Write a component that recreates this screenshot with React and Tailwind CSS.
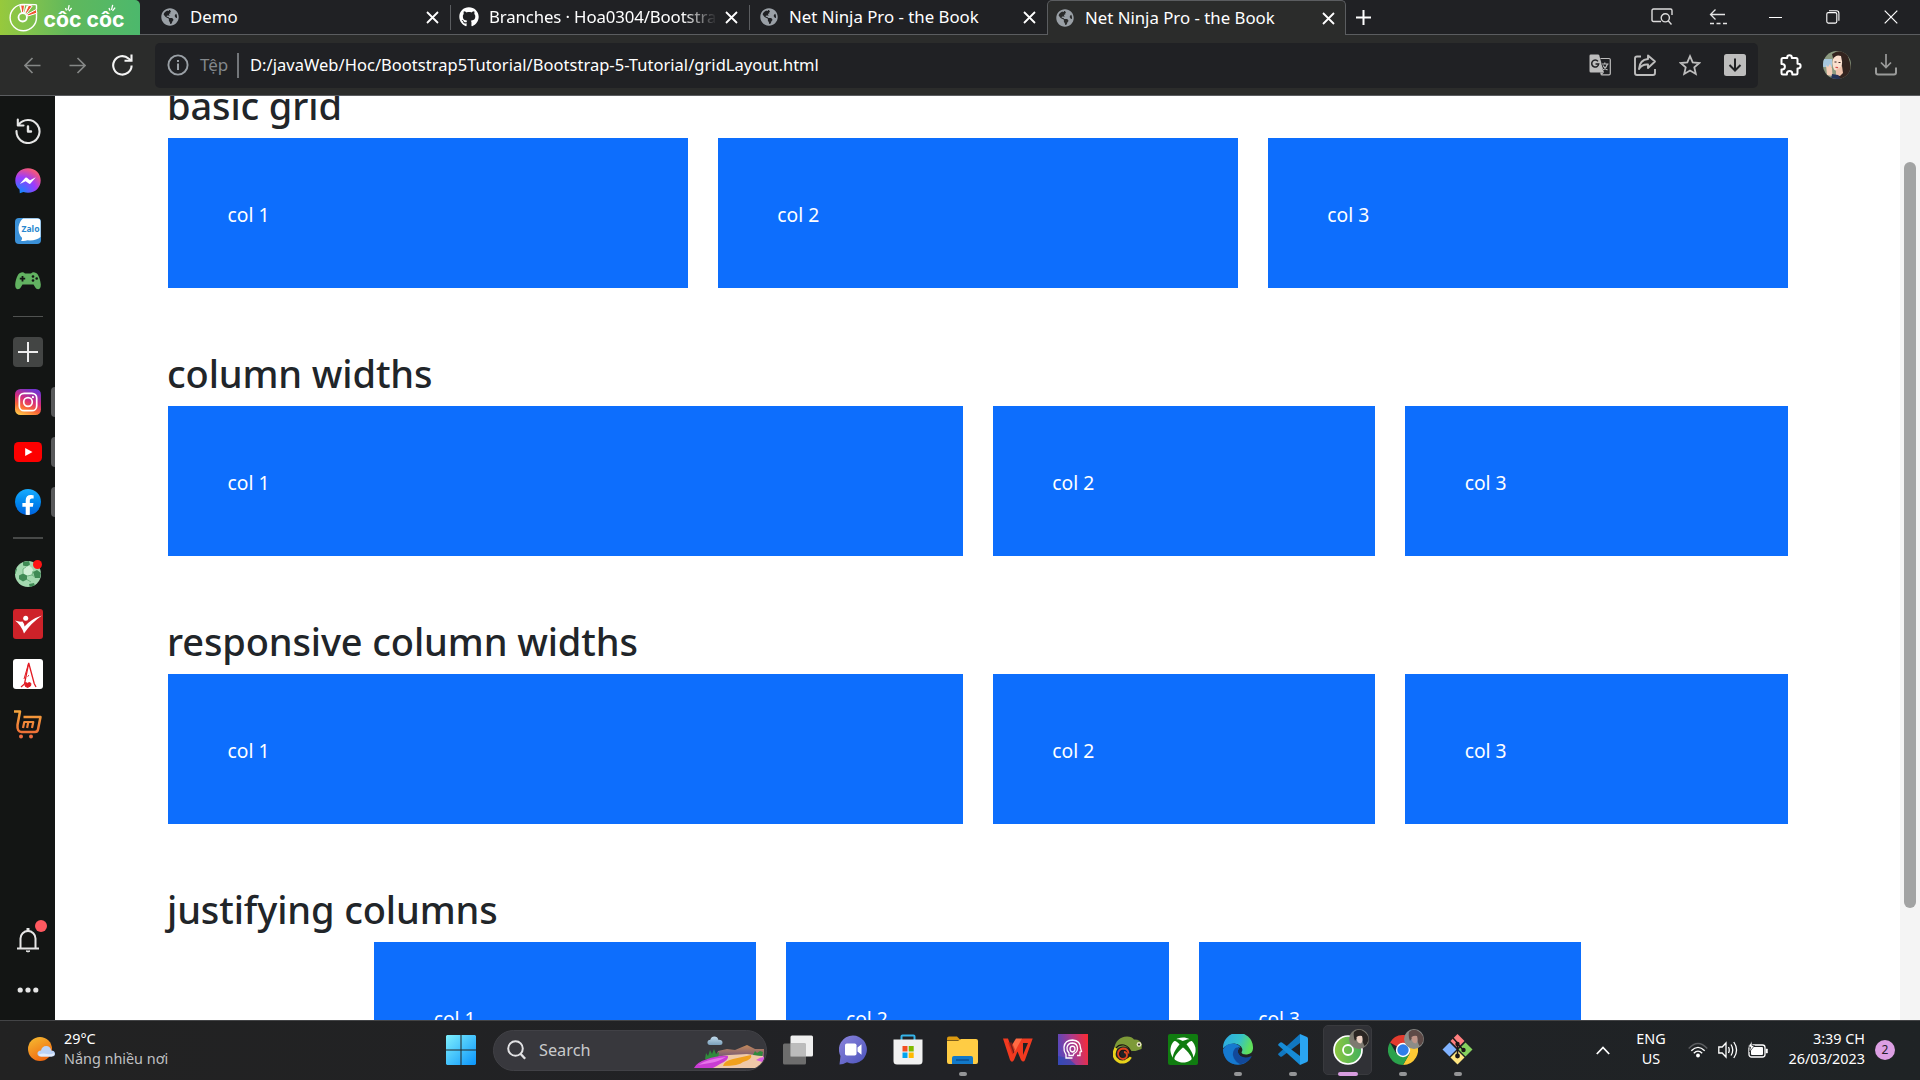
import React from "react";
import {
  FaGithub,
  FaGlobeAmericas,
  FaXbox,
  FaFacebookF,
} from "react-icons/fa";

/* ---------- tab strip ---------- */

function CocCocLogo() {
  return (
    <div className="flex h-[35px] w-[140px] shrink-0 rounded-tr-[5px] bg-linear-to-r from-[#97c93c] via-[#5fb85c] to-[#4cb86c]">
      <svg width="140" height="35" viewBox="0 0 140 35" fill="none">
        <path d="M36.5 9.5V5.5Q36.5 4.6 35 4.6L23 4.4A13.2 13.2 0 1 0 36.5 17.5V12" stroke="#fff" strokeWidth="1.4" />
        <path d="M19.2 5.5l4.2.2-.6 7-1.4.1zM26.8 5.2l3 1.2-4.8 7.2-1-.8zM35.8 9.8l.3 3.6-9.6 3-.3-1.2z" fill="#fff" />
        <path d="M20.6 5l4 .2-1.200 7.600-1.600-.100zM28.600 5.200l3.600.800-5.400 7.400-1.400-1zM36.400 9.400l.3 3.800-8.800 2.800-.8-1.600z" fill="#f0532f" stroke="#fff" strokeWidth="1" />
        <circle cx="22.700" cy="17.300" r="4.200" stroke="#fff" strokeWidth="1.800" />
        <text x="43.500" y="27.200" fill="#fff" fontFamily="Inter, sans-serif" fontSize="21" fontWeight="700" textLength="81" lengthAdjust="spacingAndGlyphs">
          côc côc
        </text>
        <g stroke="#fff" strokeWidth="1.3">
          <path d="M65.5 8l1 2.600M69.200 5.200l-1.200 5M71.600 8l-2.600 3.200" />
          <path d="M109 8l1 2.600M112.700 4.800l-1.200 5M115.100 7.600l-2.600 3.200" />
        </g>
      </svg>
    </div>
  );
}

function CloseX() {
  return (
    <svg className="shrink-0" width="13" height="13" viewBox="0 0 13 13" stroke="#fff" strokeWidth="1.8">
      <path d="M1 1l11 11M12 1L1 12" />
    </svg>
  );
}

function Tab({ icon, title, active, fade, width }) {
  return (
    <div
      className={
        (active
          ? "rounded-t-[5px] border border-b-0 border-[#5b5d60] bg-[#2b2c2b] pl-[8px] pr-[10px] "
          : "border-b border-[#5b5d60] pr-[11px] ") +
        "flex h-[35px] shrink-0 items-center " +
        width
      }
    >
      {icon === "github" ? (
        <FaGithub className="size-5 shrink-0 text-white" />
      ) : (
        <FaGlobeAmericas className="mr-px size-[18px] shrink-0 text-[#9aa0a6]" />
      )}
      <div
        className={
          "ml-[10px] flex-1 overflow-hidden whitespace-nowrap text-[16.8px] leading-6 text-white " +
          (fade ? "mr-[8px] tracking-[-0.12px] mask-r-from-85%" : "")
        }
      >
        {title}
      </div>
      <CloseX />
    </div>
  );
}

function Divider() {
  return (
    <div className="h-[35px] w-px shrink-0 border-b border-[#5b5d60] pt-[5px]">
      <div className="h-[25px] w-px bg-[#5b5d60]" />
    </div>
  );
}

function TabStrip() {
  return (
    <div className="flex h-[35px] bg-[#202124]">
      <CocCocLogo />
      <div className="w-[9px] border-b border-[#5b5d60]" />
      <Tab title="Demo" width="w-[301px] pl-[12px]" />
      <Divider />
      <Tab icon="github" title="Branches · Hoa0304/Bootstrap" fade width="w-[298px] pl-[8px]" />
      <Divider />
      <Tab title="Net Ninja Pro - the Book" width="w-[297px] pl-[10px]" />
      <Tab title="Net Ninja Pro - the Book" active width="w-[299px]" />
      <div className="flex flex-1 items-center border-b border-[#5b5d60] pl-[10px]">
        <svg width="15" height="15" viewBox="0 0 15 15" stroke="#fff" strokeWidth="2">
          <path d="M7.5 0v15M0 7.5h15" />
        </svg>
        <div className="ml-auto flex items-center">
          <svg width="22" height="18" viewBox="0 0 22 18" fill="none" stroke="#dcdcdc" strokeWidth="1.4">
            <path d="M10 13.5H2.5Q1 13.5 1 12V2.5Q1 1 2.5 1h17Q21 1 21 2.500V7" />
            <circle cx="14.3" cy="9.800" r="4.100" />
            <path d="M17.200 12.800l3.300 3.700" />
          </svg>
          <svg className="ml-[36px]" width="18" height="18" viewBox="0 0 18 18" fill="none" stroke="#e4e4e4" strokeWidth="1.300">
            <path d="M16 6.500H1.500M6.500 1.500l-5 5 5 5" />
            <path d="M1 15.500h17" strokeDasharray="4 2.500" />
          </svg>
          <svg className="ml-[42px]" width="13" height="13" viewBox="0 0 13 13" stroke="#fff">
            <path d="M0 6.500h13" />
          </svg>
          <svg className="ml-[44px]" width="14" height="14" viewBox="0 0 14 14" fill="none" stroke="#fff" strokeWidth="1.100">
            <rect x="0.800" y="2.600" width="10" height="10.500" rx="1.500" />
            <path d="M3 .8h7.500Q12.900.8 12.900 3.200v7.500" />
          </svg>
          <svg className="mr-[22px] ml-[44px]" width="14" height="14" viewBox="0 0 14 14" stroke="#fff" strokeWidth="1.200">
            <path d="M.7.7l12.600 12.600M13.300.7L.7 13.300" />
          </svg>
        </div>
      </div>
    </div>
  );
}

/* ---------- toolbar ---------- */

function Avatar() {
  return (
    <svg className="ml-[21px]" width="28" height="28" viewBox="0 0 28 28">
      <defs>
        <clipPath id="av">
          <circle cx="14" cy="14" r="14" />
        </clipPath>
      </defs>
      <g clipPath="url(#av)">
        <rect width="28" height="28" fill="#8b9a80" />
        <path d="M0 8h9v8H0z" fill="#a8c8de" />
        <path d="M9 3Q18-3 24 3q5 10 4 25H15z" fill="#33241f" />
        <path d="M10 8q3-5 8-3 2 6 .5 12-4 4.500-7.500 1.500-2.500-5-1-10.500z" fill="#fbe0cf" />
        <path d="M3 14l2 2 2-3 2 4 .5 8L4 24z" fill="#f5cdb6" />
        <path d="M13 19l6-4 1 7-3 3-4-1z" fill="#f0c4ad" />
        <path d="M9 23l6 1 3 4H8z" fill="#26355a" />
        <path d="M12.500 16.300l2.600.4" stroke="#d3504c" strokeWidth="1.300" />
        <path d="M11.500 11h2M15.500 11.500h2" stroke="#3a2622" />
      </g>
    </svg>
  );
}

function Toolbar() {
  return (
    <div className="flex h-[61px] items-center border-b border-[#5b5d60] bg-[#2b2c2b] pl-[24px]">
      <svg width="17" height="17" viewBox="0 0 17 17" fill="none" stroke="#858786" strokeWidth="1.700">
        <path d="M16.500 8.500H1M8.500 1L1 8.500 8.500 16" />
      </svg>
      <svg className="ml-[28px]" width="17" height="17" viewBox="0 0 17 17" fill="none" stroke="#858786" strokeWidth="1.700">
        <path d="M.5 8.500H16M8.500 1L16 8.500 8.500 16" />
      </svg>
      <svg className="ml-[26px]" width="21" height="22" viewBox="0 0 21 22" fill="none" stroke="#f4f4f4" strokeWidth="2.100">
        <path d="M19.600 11.500A9.200 9.200 0 1 1 16.500 4.500L19.200 6.500" />
        <path d="M12.500 6.800h7V.5" />
      </svg>
      <div className="ml-[22px] flex h-[45px] w-[1603px] items-center rounded-[5px] bg-[#202124] pl-[12px]">
        <svg width="22" height="22" viewBox="0 0 22 22" fill="none" stroke="#9aa0a6">
          <circle cx="11" cy="11" r="9.600" strokeWidth="1.900" />
          <path d="M11 9.500v6.500M11 6v2" strokeWidth="2" />
        </svg>
        <div className="ml-[11px] w-[37px] text-[17px] leading-6 text-[#83878b]">Tệp</div>
        <div className="h-[25px] w-[2px] bg-[#73767a]" />
        <div className="ml-[11px] flex-1 whitespace-nowrap text-[16.500px] leading-6 tracking-[0.03px] text-white">
          D:/javaWeb/Hoc/Bootstrap5Tutorial/Bootstrap-5-Tutorial/gridLayout.html
        </div>
        <svg width="22" height="22" viewBox="0 0 22 22">
          <path d="M11.500 4.500H20q1.300 0 1.300 1.300v13.700q0 1.300-1.300 1.300h-7.500" fill="none" stroke="#bdbdbd" strokeWidth="1.200" />
          <path d="M1.800.5h7.200q1 0 1.300 1l4.700 17H1.800Q.5 18.500.5 17V1.800Q.5.500 1.800.500z" fill="#bdbdbd" />
          <path d="M11 18.500h4l-3 3z" fill="#bdbdbd" />
          <path d="M9 7.400A3.500 3.500 0 1 0 9.700 10H6.500" fill="none" stroke="#202124" strokeWidth="1.500" />
          <path d="M12.500 10h7M15.800 8.500V10M18.500 10q-1 3.500-4.500 6M14 11.500q1.500 3 4.500 4.500" fill="none" stroke="#202124" strokeWidth="2.400" />
          <path d="M12.500 10h7M15.800 8.500V10M18.500 10q-1 3.500-4.500 6M14 11.500q1.500 3 4.500 4.500" fill="none" stroke="#bdbdbd" strokeWidth="1.200" />
        </svg>
        <svg className="ml-[22px]" width="24" height="23" viewBox="0 0 24 23" fill="none" stroke="#bdbdbd" strokeWidth="1.900" strokeLinejoin="round">
          <path d="M8 2.500H4Q2 2.500 2 4.500v14.500q0 2 2 2h16q2 0 2-2V15" />
          <path d="M15 1.500l7 6-7 6.500V10.500Q9 10 6 15 6.500 5.800 15 5z" />
        </svg>
        <svg className="ml-[22px]" width="22" height="22" viewBox="0 0 22 22" fill="none" stroke="#bdbdbd" strokeWidth="1.800">
          <path d="M11 2.200l2.700 6.200 6.600.6-5 4.400 1.500 6.600L11 16.500 5.200 20l1.500-6.600-5-4.400 6.600-.6z" />
        </svg>
        <svg className="mr-[12px] ml-[23px]" width="22" height="22" viewBox="0 0 22 22">
          <rect width="22" height="22" rx="2.500" fill="#bdbdbd" />
          <path d="M11 4.500v12M5.500 11l5.500 5.500 5.500-5.500" fill="none" stroke="#202124" strokeWidth="2" />
        </svg>
      </div>
      <svg className="ml-[22px]" width="22" height="22" viewBox="0 0 22 22" fill="none" stroke="#fff" strokeWidth="2" strokeLinejoin="round">
        <path d="M1.500 5.500q0-1.500 1.500-1.500h4.200V3.500a2.200 2.200 0 0 1 4.600 0V4H16q1.500 0 1.500 1.500v4.300h.8a2.300 2.300 0 0 1 0 4.600h-.8V19q0 1.500-1.500 1.500h-3.700V19.800a2.700 2.700 0 0 0-5.400 0v.7H3Q1.500 20.500 1.500 19v-3.600h.7a2.700 2.700 0 0 0 0-5.400h-.7z" />
      </svg>
      <Avatar />
      <svg className="ml-[24px]" width="22" height="22" viewBox="0 0 22 22" fill="none" stroke="#9a9b9a" strokeWidth="1.700">
        <path d="M11 0v13M6 8.500l5 5 5-5" />
        <path d="M1 13.500v5q0 2 2 2h16q2 0 2-2v-5" strokeWidth="2" />
      </svg>
    </div>
  );
}

/* ---------- sidebar ---------- */

function Cell({ children, marker }) {
  return (
    <div className="relative flex h-[50px] w-[55px] shrink-0 items-center justify-center">
      {children}
      {marker && <div className="absolute right-0 h-[30px] w-1 rounded-l-[4px] bg-[#58595a]" />}
    </div>
  );
}

function Sidebar() {
  return (
    <div className="flex h-[924px] w-[55px] shrink-0 flex-col bg-[#131514] pt-[10px] pb-[5px]">
      <Cell>
        <svg width="26" height="26" viewBox="0 0 26 26" fill="none" stroke="#e6e6e6" strokeWidth="2.100" strokeLinecap="round" strokeLinejoin="round">
          <path d="M2.800 1.500v6h5.700M3.500 7A11.500 11.500 0 1 1 1.500 13" />
          <path d="M13 8.500v5h3" strokeWidth="2.400" />
        </svg>
      </Cell>
      <Cell>
        <svg width="26" height="26" viewBox="0 0 26 26">
          <defs>
            <radialGradient id="ms" cx="0.200" cy="1" r="1.150">
              <stop offset="0" stopColor="#0a8cff" />
              <stop offset="0.550" stopColor="#9a3bff" />
              <stop offset="0.850" stopColor="#e8508f" />
              <stop offset="1" stopColor="#ff6a68" />
            </radialGradient>
          </defs>
          <path d="M13 .3C5.500.3.300 5.700.300 12.500c0 3.700 1.500 6.800 4.200 9l.3 3.800 3.600-1.300c1.400.5 3 .7 4.600.7 7.500 0 12.700-5.400 12.700-12.200S20.500.3 13 .3z" fill="url(#ms)" />
          <path d="M4.800 16l5.500-6.200q.8-.8 1.700 0l3 2.400 5.800-3-5.300 6.300q-.8.8-1.700.1l-3.200-2.400z" fill="#fff" />
        </svg>
      </Cell>
      <Cell>
        <svg width="26" height="26" viewBox="0 0 26 26">
          <rect width="26" height="26" rx="4" fill="#3a90d8" />
          <path d="M8 .5h14.500Q25.500.5 25.500 3.500V19q-4.500 4-13 3.300-3 1-6.500.5 1.500-1.300 1-3Q3 16 3.500 9 4.500 3 8 .5z" fill="#fff" />
          <text x="6.500" y="14.300" fontFamily="Noto Sans, sans-serif" fontSize="8.500" fontWeight="700" fill="#2b87cf" textLength="18" lengthAdjust="spacingAndGlyphs">Zalo</text>
        </svg>
      </Cell>
      <Cell>
        <svg width="26" height="18" viewBox="0 0 26 18">
          <path d="M5 1q3-1.500 5 .5h6q2-2 5-.5c2.500 1 4.500 7 4.800 11.500.2 5.500-3.800 6-5.800 2.500L18.500 12.500h-11L6 15C4 18.500 0 18 .200 12.500.500 8 2.500 2 5 1z" fill="#62b261" />
          <path d="M7.500 4v5.400M4.800 6.700h5.400" stroke="#131514" strokeWidth="1.800" />
          <g fill="#131514">
            <circle cx="18" cy="4.500" r="1.300" />
            <circle cx="18" cy="8.500" r="1.300" />
            <circle cx="21.700" cy="6.500" r="1.300" />
          </g>
        </svg>
      </Cell>
      <div className="flex h-[21px] items-center pl-[13px]">
        <div className="h-px w-[30px] bg-[#505251]" />
      </div>
      <Cell>
        <div className="flex size-[30px] items-center justify-center rounded-[4px] bg-[#434544]">
          <svg width="20" height="20" viewBox="0 0 20 20" stroke="#ededed" strokeWidth="2">
            <path d="M10 0v20M0 10h20" />
          </svg>
        </div>
      </Cell>
      <Cell marker>
        <svg width="26" height="26" viewBox="0 0 26 26" fill="none">
          <defs>
            <linearGradient id="ig" x1="0.200" y1="1" x2="0.600" y2="0">
              <stop offset="0" stopColor="#ffc84a" />
              <stop offset="0.300" stopColor="#fb6a35" />
              <stop offset="0.600" stopColor="#d52b7d" />
              <stop offset="1" stopColor="#7335cf" />
            </linearGradient>
          </defs>
          <rect width="26" height="26" rx="5.500" fill="url(#ig)" />
          <rect x="4.300" y="4.300" width="17.400" height="17.400" rx="4.800" stroke="#fff" strokeWidth="1.700" />
          <circle cx="13" cy="13" r="4.300" stroke="#fff" strokeWidth="1.700" />
          <circle cx="17.900" cy="8.200" r="1.100" fill="#fff" />
        </svg>
      </Cell>
      <Cell marker>
        <svg width="28" height="20" viewBox="0 0 28 20">
          <rect width="28" height="20" rx="4.500" fill="#fd0000" />
          <path d="M11.200 6l7.300 4-7.300 4z" fill="#fff" />
        </svg>
      </Cell>
      <Cell marker>
        <div className="flex size-[26px] items-end justify-center overflow-hidden rounded-full bg-linear-to-b from-[#18acfe] to-[#0163e0]">
          <FaFacebookF className="-mb-px h-[21px] w-[14px] text-white" />
        </div>
      </Cell>
      <div className="flex h-[22px] items-center pl-[13px]">
        <div className="h-[2px] w-[30px] bg-[#474948]" />
      </div>
      <Cell>
        <svg width="26" height="26" viewBox="0 0 26 26">
          <defs>
            <clipPath id="ball">
              <circle cx="13" cy="13" r="13" />
            </clipPath>
          </defs>
          <g clipPath="url(#ball)">
            <rect width="26" height="26" fill="#a4d9b0" />
            <circle cx="13" cy="10" r="5" fill="#cfeed5" />
            <g fill="#3f8a55">
              <path d="M8 1l6-1 1 3.500-3 2-4-1zM4 14.500l4-2 4 2v4l-4 2-4-2.500zM18 11l4-2 4 3-1 5-5 0zM0 6l2 2-1.500 5H0zM14 23l5-1 1 3-5 2z" />
            </g>
            <path d="M12 15l5-1 3 2M17 14l1-4M12 18.500l4 2.500M8 12.500V8l3-2" stroke="#61a873" strokeWidth="0.800" fill="none" />
          </g>
        </svg>
        <div className="absolute top-[11px] left-[33px] size-[9px] rounded-full bg-[#ff1414]" />
      </Cell>
      <Cell>
        <svg width="30" height="30" viewBox="0 0 30 30">
          <rect width="30" height="30" rx="3" fill="#ce2229" />
          <path d="M2 11.500q4 1.500 7.500 1 1.500 1.500 2 5Q18 10 29 6.500 18 14 11 24.500 8.500 16.500 2 11.500z" fill="#fff" />
          <circle cx="12.700" cy="9.300" r="2.500" fill="#fff" />
        </svg>
      </Cell>
      <Cell>
        <svg width="30" height="30" viewBox="0 0 30 30" fill="none" stroke="#e21b23">
          <rect width="30" height="30" rx="3" fill="#fff" stroke="none" />
          <path d="M8 28l3.500-3L15.700 4l5.500 20.500 1.800 3.500" strokeWidth="1.300" />
          <path d="M15.700 4L11 20M14.500 17.500l1.500-1.200" strokeWidth="1" />
          <path d="M12.500 23.500l2 .8 2-.8 1.500 1-.5 2.500-3 1.500-2.500-1.500z" fill="#e21b23" />
        </svg>
      </Cell>
      <Cell>
        <svg width="28" height="29" viewBox="0 0 28 29" fill="none" strokeLinejoin="round">
          <defs>
            <linearGradient id="cart" gradientUnits="userSpaceOnUse" x1="0" y1="0" x2="0" y2="29">
              <stop offset="0" stopColor="#f4a63c" />
              <stop offset="1" stopColor="#ee6236" />
            </linearGradient>
          </defs>
          <g stroke="url(#cart)" strokeWidth="2.500">
            <path d="M0 1.500h6L3.500 15q-.500 7 4 7h13.500q2.500 0 3-2.500L26.500 7H9.500" />
            <path d="M9 18l1.300-6h4l-1.200 6M14.300 12h5L18 18" strokeWidth="2.200" />
          </g>
          <circle cx="7" cy="26.500" r="2" fill="#ee6d40" />
          <circle cx="17" cy="26.500" r="2" fill="#ee6d40" />
        </svg>
      </Cell>
      <div className="mt-auto" />
      <Cell>
        <svg className="-mt-px" width="24" height="26" viewBox="0 0 24 26" fill="none" stroke="#e6e6e6" strokeWidth="2">
          <path d="M1 21.500h22" />
          <path d="M4.500 21V11.500a7.500 7.500 0 0 1 15 0V21" />
          <path d="M12 1v3" strokeWidth="3" />
          <path d="M10 24h4l-2 1z" strokeWidth="1" fill="#e6e6e6" />
        </svg>
        <div className="absolute top-[5px] left-[35px] size-3 rounded-full bg-[#ff5960]" />
      </Cell>
      <Cell>
        <svg className="-mt-px" width="22" height="6" viewBox="0 0 22 6" fill="#e6e6e6">
          <circle cx="3.200" cy="3" r="2.600" />
          <circle cx="11" cy="3" r="2.600" />
          <circle cx="18.800" cy="3" r="2.600" />
        </svg>
      </Cell>
    </div>
  );
}

/* ---------- page ---------- */

function Section({ title, cols, rowClass }) {
  return (
    <section className="pb-[60px]">
      <h2 className="mb-[10px] -ml-px h-12 text-[38px] leading-[50px] font-medium tracking-[-0.12px] text-[#212529]">{title}</h2>
      <div className={"-mx-[15px] flex " + (rowClass || "")}>
        {cols.map((width, i) => (
          <div key={i} className={"px-[15px] " + width}>
            <div className="h-[150px] bg-[#0d6efd] px-[59.5px] py-[60px] text-[19.3px] leading-[33px] whitespace-nowrap text-white">
              col {i + 1}
            </div>
          </div>
        ))}
      </div>
    </section>
  );
}

function Page() {
  return (
    <div className="flex h-[924px] flex-1 overflow-hidden bg-white">
      <main className="-mt-4 ml-[113px] w-[1619.6px]">
        <Section title="basic grid" cols={["w-1/3", "w-1/3", "w-1/3"]} />
        <Section title="column widths" cols={["w-1/2", "w-1/4", "w-1/4"]} />
        <Section title="responsive column widths" cols={["w-1/2", "w-1/4", "w-1/4"]} />
        <Section title="justifying columns" cols={["w-1/4", "w-1/4", "w-1/4"]} rowClass="justify-center pr-[0.5px]" />
      </main>
      <div className="ml-auto w-5 bg-[#f4f4f4] pt-[66px] pl-1">
        <div className="h-[746px] w-3 rounded-full bg-[#a2a3a3]" />
      </div>
    </div>
  );
}

/* ---------- taskbar ---------- */

function SearchArt() {
  return (
    <svg className="ml-auto" width="73" height="40" viewBox="0 0 73 40">
      <defs>
        <linearGradient id="hill" x1="0" y1="0" x2="0" y2="1">
          <stop offset="0" stopColor="#c58a5a" />
          <stop offset="1" stopColor="#6d5379" />
        </linearGradient>
        <linearGradient id="cloud" x1="0" y1="0" x2="0" y2="1">
          <stop offset="0" stopColor="#c3dced" />
          <stop offset="1" stopColor="#7ba0bb" />
        </linearGradient>
      </defs>
      <path d="M17 15q-3-.5-2.500-3.300.5-2 2.800-2 1-3.200 4-3.200 3.300 0 4 3.200 4-.3 4.200 2.800 0 2.500-2.500 2.500z" fill="url(#cloud)" />
      <path d="M25 21l9-2 8 1 12-5 8 4 9 0v9H22z" fill="url(#hill)" />
      <path d="M4 38q14-12 32-13l18-1 16 2q2 4-4 12z" fill="#efc9a8" />
      <path d="M12 29l1-6 2 3 2-6 2 4 2-5 2 5 3-2-1 7-6 2zM60 25l2-4 2 2 3-2 3 1-1 4z" fill="#2f8a3c" />
      <path d="M1 38q3-6 12-8.500Q26 25 35 26q1 4-8 8-3 2-7 4z" fill="#c93cd3" />
      <path d="M5 35q9-6 28-8-8 5-16 6z" fill="#e774e9" />
      <path d="M30 36q1-5 10-7l18-4q2 4-8 7-4 4-20 4z" fill="#f0a01d" />
      <path d="M63 30q4-3 8-3 0 4-2 5z" fill="#d75ce0" />
    </svg>
  );
}

function TaskIcon({ children, running, active }) {
  return (
    <div className="relative flex h-[59px] w-[55px] shrink-0 items-center justify-center">
      {active && <div className="absolute top-1 left-[3px] h-[50px] w-[49px] rounded-[5px] border border-[#393a3e] bg-[#303136]" />}
      <div className="relative -top-px">{children}</div>
      {running && <div className="absolute bottom-[4px] h-1 w-2 rounded-full bg-[#949597]" />}
      {active && <div className="absolute bottom-[4px] h-1 w-5 rounded-full bg-[#d89de0]" />}
    </div>
  );
}

function Face({ tone, hair, skin }) {
  return (
    <svg className="absolute -top-[7px] left-[16px]" width="20" height="22" viewBox="0 0 20 22">
      <circle cx="10" cy="11" r="10" className={tone} />
      <path d="M5 4q5-4.500 10.500 0Q20 8 19.500 12q-1 4-4 6-2-3-2.500-9-5 0-7 4-2-5-1-9z" className={hair} />
      <path d="M7.500 9q3-2 5.500-1 1.500 4.500-1 7.500-4.500 0-4.500-6.500z" className={skin} />
    </svg>
  );
}

function TaskApps() {
  return (
    <div className="flex">
      <TaskIcon>
        <svg width="30" height="30" viewBox="0 0 30 30">
          <rect x="7.500" y="0.500" width="22.500" height="21" rx="1.500" fill="#efefef" />
          <rect x="0" y="8.500" width="23" height="21" rx="1.500" fill="#777" fillOpacity="0.880" />
          <rect x="7.500" y="8.500" width="15.500" height="13" fill="#bcbcbc" />
        </svg>
      </TaskIcon>
      <TaskIcon>
        <svg width="28" height="30" viewBox="0 0 28 30">
          <defs>
            <linearGradient id="chat" x1="0" y1="0" x2="1" y2="1">
              <stop offset="0" stopColor="#8b84dc" />
              <stop offset="1" stopColor="#4b53bc" />
            </linearGradient>
          </defs>
          <path d="M14 .5a14 14 0 1 1-6 26.700Q4 29.500.5 29.500L1.500 21A14 14 0 0 1 14 .5z" fill="url(#chat)" />
          <rect x="6" y="8.500" width="11.500" height="12" rx="1.800" fill="#fff" />
          <path d="M18.500 12.500l4-3.200v10.400l-4-3.200z" fill="#fff" />
        </svg>
      </TaskIcon>
      <TaskIcon>
        <svg width="30" height="31" viewBox="0 0 30 31">
          <path d="M8.500 7V2.500Q8.500 1.500 9.500 1.500h11Q21.500 1.500 21.500 2.500V7" fill="none" stroke="#35b4ea" strokeWidth="2" />
          <path d="M.5 5.500h29V27q0 3.500-3.500 3.500H4Q.5 30.500.5 27z" fill="#f1f1f1" />
          <path d="M9.500 12h5v5.500h-5z" fill="#f25022" />
          <path d="M15.700 12h5v5.500h-5z" fill="#7fba00" />
          <path d="M9.500 18.500h5V24h-5z" fill="#00a4ef" />
          <path d="M15.700 18.500h5V24h-5z" fill="#ffb900" />
        </svg>
      </TaskIcon>
      <TaskIcon running>
        <svg width="31" height="28" viewBox="0 0 31 28">
          <path d="M0 2.500Q0 .5 2 .5h8l4 4H0z" fill="#dc9a10" />
          <path d="M0 5h11l3-2h15q2 0 2 2v21q0 2-2 2H2q-2 0-2-2z" fill="#ffcc44" />
          <path d="M5 28v-6q0-2 2-2h17q2 0 2 2v6z" fill="#1279c9" />
          <path d="M9 24h13" stroke="#0b4f91" strokeWidth="1.500" />
        </svg>
      </TaskIcon>
      <TaskIcon>
        <svg width="30" height="24" viewBox="0 0 30 24">
          <path d="M0 .5h5l5.500 15L15 4.500Q16.500.5 20 .5h9.700L22 22q-1.500 3-4 0l-3.500-8.500L11 22q-2 3.500-4 0z" fill="#f23a20" />
          <path d="M13 .5h6L11.500 14 9 7z" fill="#ff6a43" />
          <path d="M20 5h5l-5 12z" fill="#202124" />
          <path d="M5 4.500h4l3 7-2.500 5z" fill="#b51e13" fillOpacity="0.600" />
        </svg>
      </TaskIcon>
      <TaskIcon>
        <svg width="30" height="31" viewBox="0 0 30 31" fill="none">
          <defs>
            <linearGradient id="pf" x1="0" y1="0.500" x2="1" y2="0.300">
              <stop offset="0" stopColor="#5348bd" />
              <stop offset="0.500" stopColor="#a93a8e" />
              <stop offset="1" stopColor="#f72b38" />
            </linearGradient>
          </defs>
          <rect width="30" height="31" fill="url(#pf)" />
          <path d="M0 31V22l10 2 8 7z" fill="#2d48b0" fillOpacity="0.700" />
          <g stroke="#fff" strokeWidth="1.300">
            <path d="M14.500 24H8V20.500Q5.500 17 6 13 7 6 14.500 6 22.500 6.500 22.500 14l1 3.500-1.500.5v3.500h-3" />
            <path d="M11 21.500v-2.500Q8.500 16.500 9 13.500 10 9 14.500 9q5 .5 5 5.500 0 3.500-3.500 5l-1 2z" />
            <path d="M14.500 12.200q2.500.3 2.500 2.800t-2.500 3q-2.500-.5-2.500-3t2.500-2.800z" />
          </g>
        </svg>
      </TaskIcon>
      <TaskIcon>
        <svg width="30" height="28" viewBox="0 0 30 28" fill="none">
          <path d="M1 13Q3 1 14 .5q5 0 7 3 6-.5 8 5l-.5 4.500-6 2-4 0q-3-4.500-8.500-4.500Q4 11 1 17z" fill="#7d9a38" />
          <path d="M3 12Q-.5 18 2.500 22.500q4 5 10 3 3.500-1.500 5-4.500" stroke="#e9d21b" strokeWidth="3" />
          <path d="M3 12Q6 8 11 9q6 1.500 6.500 8-1 5.500-6 5.500-5-.5-5-5 .5-3.500 4-3.500 3 .5 2.500 3.500" stroke="#1d1412" strokeWidth="1.200" />
          <path d="M15.500 17.500q-.5-5-5.500-5-5 1-5 5.500.5 4.500 5 5 4-.5 4-4-.5-3-3-3" stroke="#e0451e" strokeWidth="1.800" />
          <circle cx="26" cy="8.500" r="2.400" fill="#e9e6c5" />
          <circle cx="26" cy="8.500" r="1.100" fill="#333" />
        </svg>
      </TaskIcon>
      <TaskIcon>
        <div className="flex h-[31px] w-[30px] items-center justify-center rounded-[2px] bg-[#107c10]">
          <FaXbox className="size-[26px] text-white" />
        </div>
      </TaskIcon>
      <TaskIcon running>
        <svg width="30" height="31" viewBox="0 0 30 31">
          <defs>
            <linearGradient id="ed" x1="0" y1="0" x2="1" y2="0.300">
              <stop offset="0" stopColor="#2aa7e8" />
              <stop offset="0.600" stopColor="#35c1c9" />
              <stop offset="1" stopColor="#5fe05c" />
            </linearGradient>
          </defs>
          <path d="M0 15.500A15 15 0 0 0 18 30.500Q24 29.500 28 23.500 22 26 17.500 22.500 13 19 16 14 10 8 0 15.500z" fill="#1263b8" />
          <path d="M9.500 17q0 9 8 13.300Q24 29 28.500 23q.5-1-.5-.8-6 2.500-10.500-.2Q13 18.500 16 14q-5-2-6.500 3z" fill="#12499a" />
          <path d="M0 14.500A15 15 0 0 1 30 13q.5 6.500-6 7.500-5 .3-5.500-2.200 2-2.800-.5-5.800-4-4-10-2.500-6 1.500-8 4.500z" fill="url(#ed)" />
          <path d="M0 15.500Q3 9 10.500 9.500q6 .5 7 4.500-3-1.500-5.500.5-3.500 4-1.500 9.500 2 4.500 6 6.300Q2 31.500 0 15.500z" fill="#1679cf" />
        </svg>
      </TaskIcon>
      <TaskIcon running>
        <svg width="30" height="31" viewBox="0 0 30 31">
          <path d="M22 0l7 3q1 .5 1 2v21q0 1.500-1 2l-7 3z" fill="#2aa5f2" />
          <path d="M22 0v9L4 22.500q-1 .6-1.800 0L.5 21q-.7-.8 0-1.500z" fill="#1177c0" />
          <path d="M22 31v-9L4 8.500q-1-.6-1.800 0L.5 10q-.7.8 0 1.500z" fill="#168bd6" />
        </svg>
      </TaskIcon>
      <TaskIcon active>
        <svg width="30" height="30" viewBox="0 0 30 30" fill="none">
          <defs>
            <linearGradient id="cc" x1="0" y1="0" x2="1" y2="0">
              <stop offset="0" stopColor="#8fc741" />
              <stop offset="1" stopColor="#41b05c" />
            </linearGradient>
          </defs>
          <circle cx="15" cy="15" r="14" fill="url(#cc)" stroke="#fff" strokeWidth="1.700" />
          <circle cx="15" cy="15" r="5" stroke="#fff" strokeWidth="1.800" />
        </svg>
        <Face tone="fill-[#7d7a70]" hair="fill-[#2a2522]" skin="fill-[#ecd0c2]" />
      </TaskIcon>
      <TaskIcon running>
        <svg width="30" height="30" viewBox="0 0 30 30">
          <path d="M15 15L2 7.500A15 15 0 0 1 28 7.500z" fill="#e33b2e" />
          <path d="M28 7.500A15 15 0 0 1 15 30l6.500-11.300L21.500 7.500z" fill="#fcc934" />
          <path d="M2 7.500A15 15 0 0 0 15 30l6.500-11.300H8.500z" fill="#2ba24c" />
          <circle cx="15" cy="15" r="7.200" fill="#fff" />
          <circle cx="15" cy="15" r="5.700" fill="#2f7de9" />
        </svg>
        <Face tone="fill-[#8b8c88]" hair="fill-[#5d4a47]" skin="fill-[#bf9488]" />
      </TaskIcon>
      <TaskIcon running>
        <svg width="31" height="31" viewBox="0 0 31 31">
          <path d="M15.500 0l7 7-7 7-7-7z" fill="#ff8080" />
          <path d="M7.500 8.500l7 7-7 7-7-7z" fill="#80b3ff" />
          <path d="M23.500 8.500l7 7-7 7-7-7z" fill="#87d35f" />
          <path d="M15.500 16.500l7 7-7 7-7-7z" fill="#ffe680" />
          <path d="M11 4l4.500 5v13M15.500 10l6 6" stroke="#1c1717" strokeWidth="1.500" fill="none" />
          <g fill="#1c1717">
            <circle cx="15.500" cy="10" r="2.200" />
            <circle cx="15.500" cy="22" r="2.400" />
            <circle cx="21.500" cy="16" r="2.200" />
          </g>
        </svg>
      </TaskIcon>
    </div>
  );
}

function Taskbar() {
  return (
    <div className="flex h-[60px] items-center border-t border-[#434446] bg-linear-to-r from-[#222222] via-[#212226] to-[#1f2325]">
      <svg className="ml-[27px] shrink-0" width="28" height="28" viewBox="0 0 28 28">
        <defs>
          <linearGradient id="sun" x1="0.200" y1="0" x2="0.700" y2="1">
            <stop offset="0" stopColor="#f5b730" />
            <stop offset="1" stopColor="#f0650f" />
          </linearGradient>
        </defs>
        <circle cx="13" cy="12" r="12.000" fill="url(#sun)" />
        <path d="M13.500 19.500q-3-.4-3-3t3.500-3q1-4.500 5.200-4.500t5 4.500q3.500 0 3.800 3t-3 3z" fill="#bcd3f7" />
        <path d="M14 19.500q-2-.5-2-2 4-1.500 8-.5t7-1q.5 3-2.500 3.500z" fill="#e3ecfb" />
      </svg>
      <div className="-mt-[3px] ml-[9px] w-[382px] text-[14.400px] leading-5 whitespace-nowrap">
        <div className="text-white">29°C</div>
        <div className="text-[#c0c1c3]">Nắng nhiều nơi</div>
      </div>
      <svg className="-mt-px shrink-0" width="30" height="30" viewBox="0 0 30 30">
        <defs>
          <linearGradient id="win" gradientUnits="userSpaceOnUse" x1="0" y1="0" x2="30" y2="30">
            <stop offset="0" stopColor="#7ff0fd" />
            <stop offset="1" stopColor="#0a94fb" />
          </linearGradient>
        </defs>
        <path d="M1 0h13.500v14.500H0V1zM15.500 0H29l1 1v13.500H15.500zM0 15.500h14.500V30H1l-1-1zM15.500 15.500H30V29l-1 1H15.500z" fill="url(#win)" />
      </svg>
      <div className="-mt-px ml-[17px] flex h-[41px] w-[274px] shrink-0 items-center overflow-hidden rounded-full border border-[#414146] bg-[#38383d] pl-[13px]">
        <svg width="19" height="20" viewBox="0 0 19 20" fill="none" stroke="#e2e2e4" strokeWidth="2">
          <circle cx="8.500" cy="8.500" r="7.300" />
          <path d="M13.500 13.800l4.700 5" strokeWidth="2.400" />
        </svg>
        <span className="ml-[13px] text-[16.300px] leading-6 text-[#c9cacc]">Search</span>
        <SearchArt />
      </div>
      <div className="w-[3px] shrink-0" />
      <TaskApps />
      <div className="ml-auto flex items-center pr-[25px] text-[14.400px] leading-[20px] text-white">
        <svg className="-mt-px" width="14" height="9" viewBox="0 0 14 9" fill="none" stroke="#fff" strokeWidth="1.800">
          <path d="M.8 8L7 1.500 13.200 8" />
        </svg>
        <div className="-mt-[3px] ml-[24px] w-[34px] text-center">
          ENG
          <br />
          US
        </div>
        <svg className="-mt-px ml-[20px]" width="20" height="16" viewBox="0 0 20 16" fill="none" stroke="#fff" strokeWidth="1.400">
          <path d="M.7 6.500Q10-3.500 19.300 6.500" stroke="#5b5d60" />
          <path d="M3.300 8.800q6.700-6.800 13.400 0M5.800 11.300q4.200-4.300 8.400 0" />
          <circle cx="10" cy="13.500" r="1.900" fill="#fff" stroke="none" />
        </svg>
        <svg className="-mt-px ml-[10px]" width="20" height="18" viewBox="0 0 20 18" fill="none" stroke="#fff" strokeWidth="1.300">
          <path d="M.8 6h3.400L8 2v14l-3.800-4H.8z" />
          <path d="M10.500 6q1.500 3 0 6M13 3.500q3.500 5.500 0 11M15.800 1q5.500 8 0 16" />
        </svg>
        <svg className="-mt-[3px] ml-[10px]" width="20" height="17" viewBox="0 0 20 17" fill="none">
          <rect x="1" y="4" width="16" height="12" rx="2.500" stroke="#fff" strokeWidth="1.300" />
          <rect x="3" y="6" width="12" height="8" rx="1" fill="#fff" />
          <path d="M18 8v4h1.500V8z" fill="#fff" stroke="#fff" strokeWidth="0.500" />
          <path d="M4 0L0 6h2.500L1.500 11l5-6.500H4z" fill="#fff" stroke="#202225" strokeWidth="0.700" />
        </svg>
        <div className="-mt-[3px] ml-[11px] w-[86px] text-right whitespace-nowrap">
          3:39 CH
          <br />
          26/03/2023
        </div>
        <div className="-mt-px ml-[10px] flex size-5 items-center justify-center rounded-full bg-[#dc9fe3] text-[12px] leading-none text-[#26202a]">
          2
        </div>
      </div>
    </div>
  );
}

export default function App() {
  return (
    <div className="flex h-[1080px] w-[1920px] flex-col overflow-hidden font-['Noto_Sans','Open_Sans',sans-serif]">
      <TabStrip />
      <Toolbar />
      <div className="flex h-[924px]">
        <Sidebar />
        <Page />
      </div>
      <Taskbar />
    </div>
  );
}
